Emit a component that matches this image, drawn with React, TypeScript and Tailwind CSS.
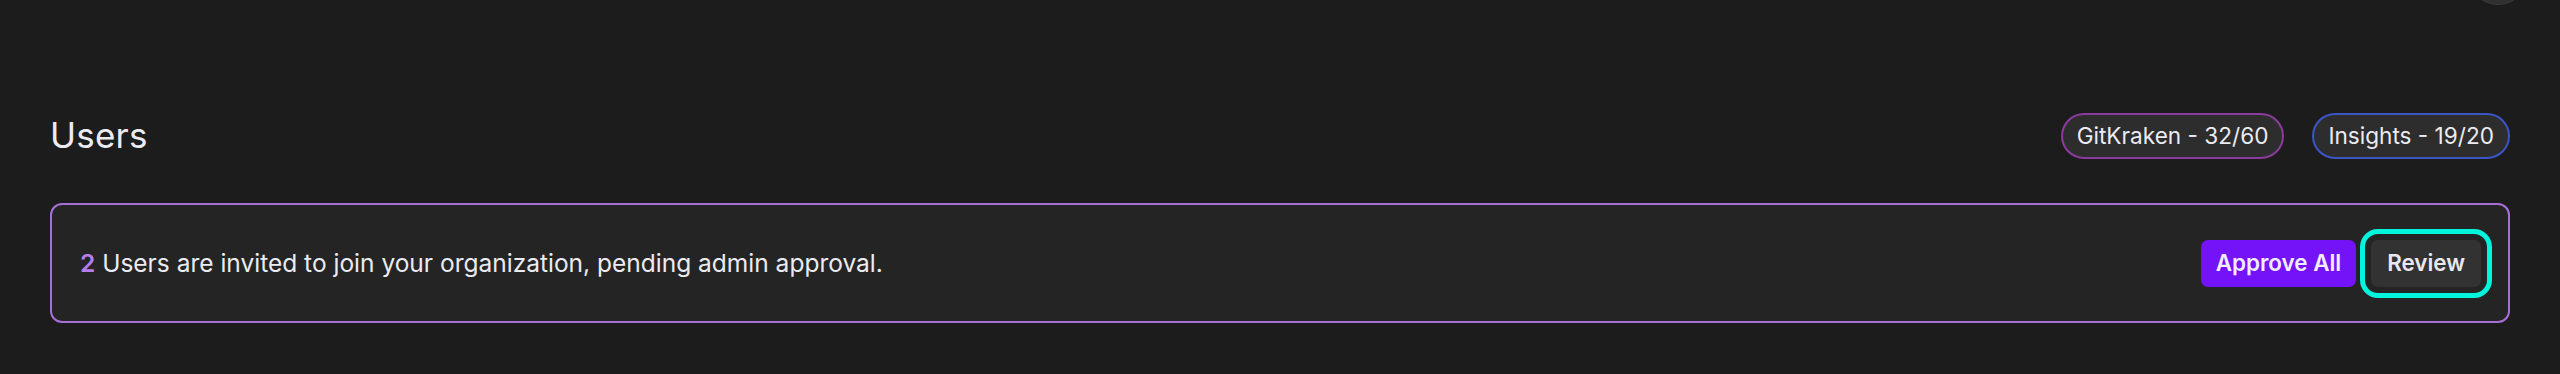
import React from "react";

export default function App() {
  return (
    <div
      className="relative w-full h-[374px] bg-[#1c1c1c] overflow-hidden text-[#ebebf2]"
      style={{ fontFamily: "Inter, 'Noto Sans', sans-serif" }}
    >
      <div className="absolute left-[2468px] top-[-55px] w-[60px] h-[60px] rounded-full bg-[#303030] border border-[#3a3a3a]" />
      <div className="px-[50px] pt-[113px]">
        <div className="flex items-center justify-between h-[46px]">
          <h1 className="mt-[-1px] text-[35px] leading-none font-normal tracking-[0.2px]">Users</h1>
          <div className="flex gap-[28px]">
            <span className="h-[46px] px-[14px] flex items-center rounded-full bg-[#2d2d2d] border-[2px] border-[#8b3b9e] text-[22.6px]">
              GitKraken - 32/60
            </span>
            <span className="h-[46px] px-[14px] flex items-center rounded-full bg-[#2d2d2d] border-[2px] border-[#3b55c6] text-[22.6px]">
              Insights - 19/20
            </span>
          </div>
        </div>
        <div className="mt-[44px] h-[120px] flex items-center justify-between rounded-[12px] border-[2px] border-[#a66fd8] bg-[#242424] pl-[28px] pr-[27px]">
          <p className="text-[24.5px]">
            <span className="font-semibold text-[#b77ee9]">2</span> Users are invited to join your organization, pending admin approval.
          </p>
          <div className="flex items-center gap-[15px]">
            <button className="h-[47px] px-[15px] rounded-[7px] bg-[#7413f7] text-[22.4px] font-semibold text-[#f2ecff]">
              Approve All
            </button>
            <button className="h-[47px] px-[16px] rounded-[7px] bg-[#323232] text-[22.4px] font-semibold text-[#e8e8f0] outline-[5px] outline-solid outline-[#00f5dc] outline-offset-[6px]">
              Review
            </button>
          </div>
        </div>
      </div>
    </div>
  );
}
